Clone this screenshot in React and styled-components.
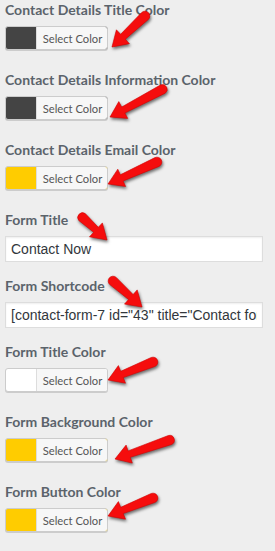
import styled, { createGlobalStyle } from "styled-components";

const GlobalStyle = createGlobalStyle`
  html, body {
    margin: 0;
    padding: 0;
    background: #eeeeee;
  }
  * {
    box-sizing: border-box;
  }
`;

const Panel = styled.div`
  position: relative;
  width: 275px;
  height: 551px;
  overflow: hidden;
  background: #eeeeee;
  padding: 0 5px;
  font-family: Lato, "Liberation Sans", sans-serif;
`;

const Field = styled.div`
  display: flex;
  flex-direction: column;
  align-items: flex-start;
  margin-bottom: ${({ $input }) => ($input ? "14px" : "20px")};
`;

const Label = styled.div`
  font-size: 14px;
  font-weight: 700;
  line-height: 20px;
  height: 20px;
  color: #5b636b;
  margin-bottom: 6px;
  white-space: nowrap;
`;

const ColorButton = styled.div`
  display: flex;
  height: 24px;
  width: 103px;
  border: 1px solid #cccccc;
  border-radius: 3px;
  background: ${({ $color }) => $color};
  box-shadow: 0 1px 0 #cccccc;
  overflow: hidden;
`;

const Swatch = styled.span`
  width: 30px;
  flex: none;
`;

const ButtonText = styled.span`
  flex: 1;
  display: flex;
  align-items: center;
  justify-content: center;
  background: #f7f7f7;
  border-left: 1px solid #dddddd;
  font-size: 11.2px;
  color: #555555;
  padding-left: 1px;
`;

const TextInput = styled.input`
  width: 258px;
  height: 26px;
  border: 1px solid #dddddd;
  box-shadow: inset 0 1px 2px rgba(0, 0, 0, 0.07);
  background: #ffffff;
  padding: 0 5px;
  font-family: "Liberation Sans", Arial, sans-serif;
  font-size: 14px;
  color: #32373c;
  outline: none;
`;

const Overlay = styled.svg`
  position: absolute;
  left: 0;
  top: 0;
  pointer-events: none;
  filter: drop-shadow(1px 2px 1.5px rgba(0, 0, 0, 0.55));
`;

const fields = [
  { label: "Contact Details Title Color", color: "#444444" },
  { label: "Contact Details Information Color", color: "#444444" },
  { label: "Contact Details Email Color", color: "#ffcc00" },
  { label: "Form Title", value: "Contact Now" },
  { label: "Form Shortcode", value: '[contact-form-7 id="43" title="Contact form 1"]' },
  { label: "Form Title Color", color: "#ffffff" },
  { label: "Form Background Color", color: "#ffcc00" },
  { label: "Form Button Color", color: "#ffcc00" },
];

// tail x, tail y, tip x, tip y
const arrows = [
  [145, 16, 112, 47],
  [163, 89, 110, 117],
  [157, 162, 108, 184],
  [82, 217, 107, 240],
  [113, 281, 142, 307],
  [153, 362, 108, 380],
  [170, 440, 115, 459],
  [153, 498, 108, 516],
];

function arrowPath([x1, y1, x2, y2]) {
  const dx = x2 - x1;
  const dy = y2 - y1;
  const len = Math.hypot(dx, dy);
  const ux = dx / len;
  const uy = dy / len;
  const nx = -uy;
  const ny = ux;
  const h = 15;
  const w = 9.5;
  const s0 = 4.8;
  const s1 = 3.4;
  const bx = x2 - ux * h;
  const by = y2 - uy * h;
  const p = (x, y) => `${x.toFixed(1)} ${y.toFixed(1)}`;
  return [
    `M ${p(x1 + nx * s0, y1 + ny * s0)}`,
    `L ${p(bx + nx * s1, by + ny * s1)}`,
    `L ${p(bx + nx * w, by + ny * w)}`,
    `L ${p(x2, y2)}`,
    `L ${p(bx - nx * w, by - ny * w)}`,
    `L ${p(bx - nx * s1, by - ny * s1)}`,
    `L ${p(x1 - nx * s0, y1 - ny * s0)}`,
    `A ${s0} ${s0} 0 0 0 ${p(x1 + nx * s0, y1 + ny * s0)}`,
    "Z",
  ].join(" ");
}

export default function App() {
  return (
    <>
      <GlobalStyle />
      <Panel>
        {fields.map((f) => (
          <Field key={f.label} $input={f.value !== undefined}>
            <Label>{f.label}</Label>
            {f.value !== undefined ? (
              <TextInput type="text" defaultValue={f.value} />
            ) : (
              <ColorButton $color={f.color}>
                <Swatch />
                <ButtonText>Select Color</ButtonText>
              </ColorButton>
            )}
          </Field>
        ))}
        <Overlay width="275" height="551" viewBox="0 0 275 551">
          {arrows.map((a, i) => (
            <path key={i} d={arrowPath(a)} fill="#f50d0d" stroke="#d40000" strokeWidth="0.6" strokeLinejoin="round" />
          ))}
        </Overlay>
      </Panel>
    </>
  );
}
